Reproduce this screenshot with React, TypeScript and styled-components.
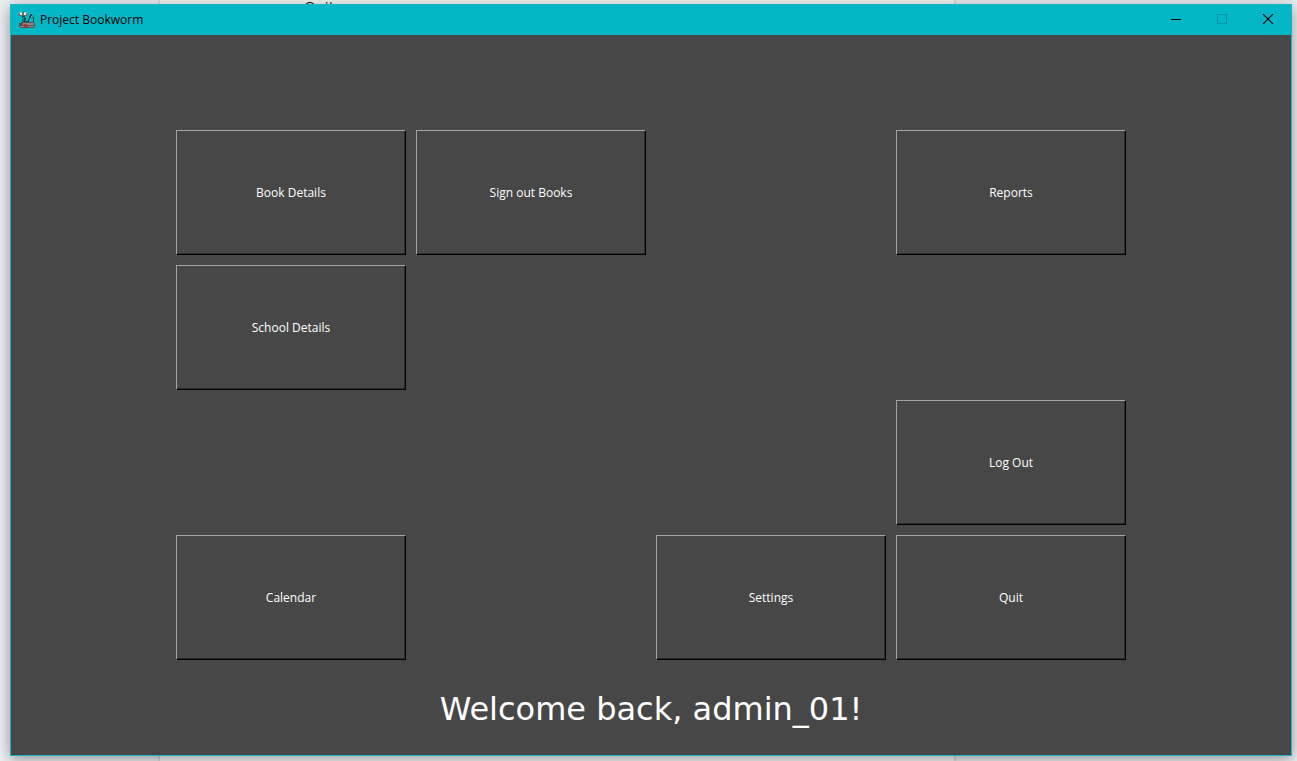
import React from "react";
import styled, { createGlobalStyle } from "styled-components";

const GlobalStyle = createGlobalStyle`
  * { box-sizing: border-box; }
  body {
    margin: 0;
    background: #edeff2;
    font-family: "Open Sans", "Noto Sans", sans-serif;
    font-size: 12px;
  }
`;

const Desktop = styled.div`
  position: relative;
  display: flex;
  min-height: 100vh;
  padding: 4px 5px 5px 10px;
  overflow: hidden;
`;

const Paper = styled.div`
  position: absolute;
  top: 0;
  bottom: 0;
  left: 160px;
  width: 794px;
  padding-left: 144px;
  background: #f6f6f6;
  box-shadow: 0 0 3px #a0a0a0;
  color: #000;
  font-size: 15px;
  line-height: 12px;
`;

const AppWindow = styled.main`
  position: relative;
  display: flex;
  flex: 1;
  flex-direction: column;
  border: 1px solid #18b6c4;
  background: #474747;
  box-shadow: 0 3px 14px rgba(0, 0, 0, 0.4);
`;

const TitleBar = styled.header`
  display: flex;
  align-items: center;
  height: 30px;
  padding-left: 8px;
  background: #03b7c7;
  color: #000;
`;

const Title = styled.h1`
  flex: 1;
  margin: 0 0 0 5px;
  font-size: 12px;
  font-weight: 400;
  line-height: 16px;
`;

const WindowButton = styled.button`
  display: flex;
  align-items: center;
  justify-content: center;
  width: 46px;
  height: 28px;
  padding: 0;
  border: 0;
  background: transparent;
  color: #000;

  &:disabled { color: #0293a0; }
`;

const WindowControls = styled.div`
  display: flex;
  align-self: flex-start;
`;

const Content = styled.div`
  display: flex;
  flex: 1;
  flex-direction: column;
  padding: 95px 10px 20px;
`;

const Menu = styled.nav`
  display: grid;
  grid-template-columns: repeat(4, 230px);
  grid-template-rows: repeat(4, 125px);
  gap: 10px;
  justify-content: center;
`;

const MenuButton = styled.button<{ $column: number; $row: number }>`
  grid-column: ${(p) => p.$column};
  grid-row: ${(p) => p.$row};
  padding: 0;
  border: solid;
  border-width: 1px;
  border-color: #a3a3a3 #000 #000 #a3a3a3;
  background: #474747;
  box-shadow: inset -1px -1px #2b2b2b;
  color: #fff;
  font: inherit;
`;

const Welcome = styled.p`
  margin: 25px 0 0;
  color: #fff;
  font-family: Verdana, "DejaVu Sans", sans-serif;
  font-size: 32px;
  line-height: 48px;
  text-align: center;
`;

const items = [
  { label: "Book Details", column: 1, row: 1 },
  { label: "Sign out Books", column: 2, row: 1 },
  { label: "Reports", column: 4, row: 1 },
  { label: "School Details", column: 1, row: 2 },
  { label: "Log Out", column: 4, row: 3 },
  { label: "Calendar", column: 1, row: 4 },
  { label: "Settings", column: 3, row: 4 },
  { label: "Quit", column: 4, row: 4 },
];

function BookwormIcon() {
  return (
    <svg width="16" height="16" viewBox="0 0 16 16" shapeRendering="crispEdges" aria-hidden="true">
      <path d="M3 4h3v2h1v2H6v1h3V7h1V4h1V2h2v1h1v2h1v6h-1V6h-1V4h-1v2h-1v3h-1v2H4V9H3V7h1V6H3z" fill="#0d4a50" />
      <path d="M4 5h1v4H4zM13 3h1v3h-1zM10 7h1v2h-1z" fill="#2b8a83" />
      <path d="M0 0h8v4H0z" fill="#5b6f70" />
      <path d="M1 1h2v2H1zM5 1h2v2H5z" fill="#f2f2ec" />
      <path d="M0 0h3v1H0zM5 0h3v1H5z" fill="#b9c1be" />
      <path d="M2 10h13v1h1v4h-1v1H1v-1H0v-4h2z" fill="#5a5052" />
      <path d="M4 11h11v2H4zM1 14h4v1H1zM9 14h6v1H9z" fill="#8e8889" />
      <path d="M5 12h3v3H5z" fill="#b8313b" />
    </svg>
  );
}

export default function App() {
  return (
    <>
      <GlobalStyle />
      <Desktop>
        <Paper>Quit</Paper>
        <AppWindow>
          <TitleBar>
            <BookwormIcon />
            <Title>Project Bookworm</Title>
            <WindowControls>
              <WindowButton aria-label="Minimize">
                <svg width="10" height="10" shapeRendering="crispEdges"><path d="M0 5h10v1H0z" fill="currentColor" /></svg>
              </WindowButton>
              <WindowButton aria-label="Maximize" disabled>
                <svg width="10" height="10"><rect x=".5" y=".5" width="9" height="9" fill="none" stroke="currentColor" /></svg>
              </WindowButton>
              <WindowButton aria-label="Close">
                <svg width="10" height="10"><path d="M0 0l10 10M10 0L0 10" fill="none" stroke="currentColor" strokeWidth="1.2" /></svg>
              </WindowButton>
            </WindowControls>
          </TitleBar>
          <Content>
            <Menu>
              {items.map((item) => (
                <MenuButton key={item.label} $column={item.column} $row={item.row}>
                  {item.label}
                </MenuButton>
              ))}
            </Menu>
            <Welcome>Welcome back, admin_01!</Welcome>
          </Content>
        </AppWindow>
      </Desktop>
    </>
  );
}
